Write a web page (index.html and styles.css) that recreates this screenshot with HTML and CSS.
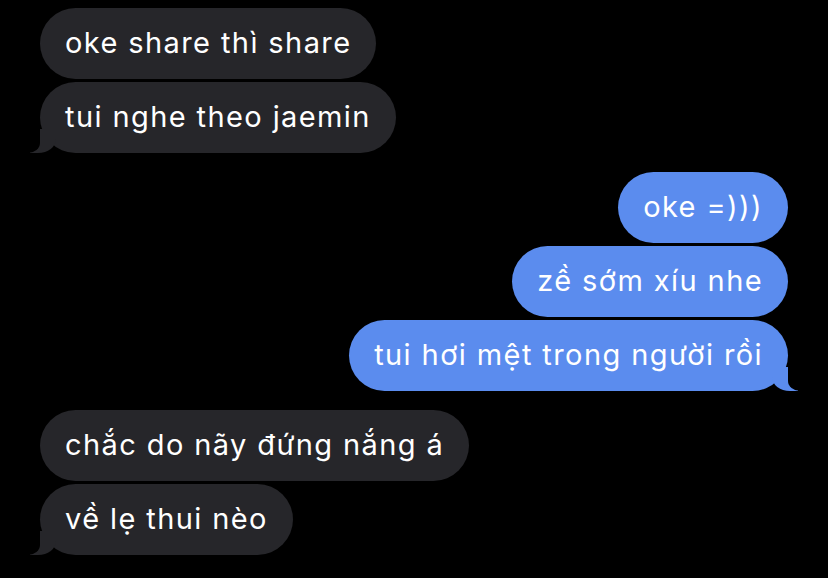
FILE: index.html
```html
<!DOCTYPE html>
<html lang="vi">
<head>
    <meta charset="UTF-8">
    <meta name="viewport" content="width=device-width, initial-scale=1.0">
    <title>Messages</title>
    <link rel="stylesheet" href="styles.css">
</head>
<body>
    <div class="thread">
        <div class="group received">
            <div class="bubble">oke share thì share</div>
            <div class="bubble tail">tui nghe theo jaemin</div>
        </div>

        <div class="group sent">
            <div class="bubble">oke =)))</div>
            <div class="bubble">zề sớm xíu nhe</div>
            <div class="bubble tail">tui hơi mệt trong người rồi</div>
        </div>

        <div class="group received">
            <div class="bubble">chắc do nãy đứng nắng á</div>
            <div class="bubble tail">về lẹ thui nèo</div>
        </div>
    </div>
</body>
</html>
```

FILE: styles.css
```css
body {
    margin: 0;
    background: #000;
    font-family: Inter, "Noto Sans", sans-serif;
    color: #fff;
    height: 578px;
    overflow: hidden;
}

.thread {
    display: flex;
    flex-direction: column;
    gap: 19px;
    padding: 8px 40px;
}

.group {
    display: flex;
    flex-direction: column;
    gap: 3px;
}

.received {
    align-items: flex-start;
}

.sent {
    align-items: flex-end;
}

.bubble {
    position: relative;
    font-size: 29px;
    letter-spacing: 1.4px;
    line-height: 34px;
    padding: 18px 25px 19px 25px;
    border-radius: 36px;
    white-space: nowrap;
}

.received .bubble {
    background: #26262a;
}

.sent .bubble {
    background: #5b8cee;
}

/* iMessage tail: coloured curl + black cut-out */
.bubble.tail::before,
.bubble.tail::after {
    content: "";
    position: absolute;
    bottom: 0;
    height: 24px;
}

.received .tail::before {
    left: -10px;
    width: 26px;
    background: #26262a;
    border-bottom-right-radius: 18px 14px;
}

.received .tail::after {
    left: -20px;
    width: 20px;
    background: #000;
    border-bottom-right-radius: 12px 10px;
}

.sent .tail::before {
    right: -10px;
    width: 26px;
    background: #5b8cee;
    border-bottom-left-radius: 18px 14px;
}

.sent .tail::after {
    right: -20px;
    width: 20px;
    background: #000;
    border-bottom-left-radius: 12px 10px;
}
```
